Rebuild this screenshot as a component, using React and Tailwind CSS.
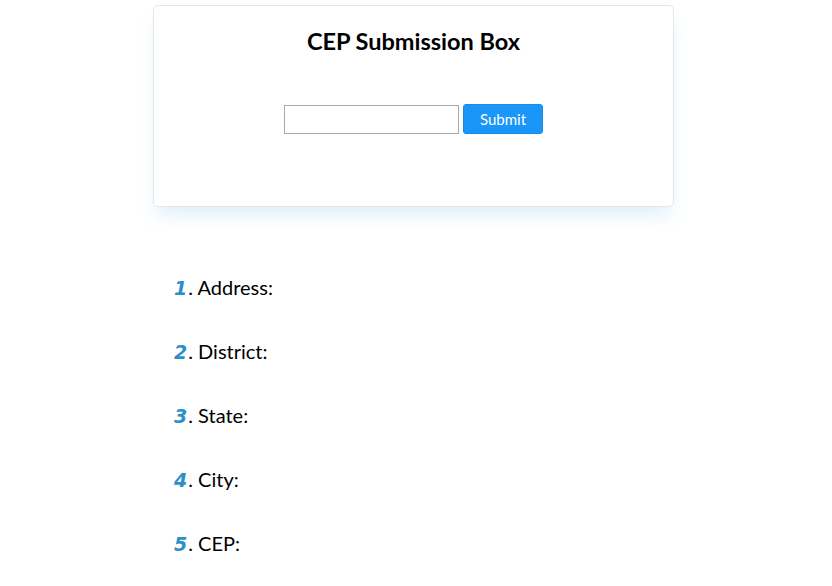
export default function App() {
  const fields = ['Address', 'District', 'State', 'City', 'CEP']

  return (
    <div className="min-h-[586px] bg-white font-['Lato','Liberation_Sans',sans-serif] text-black">
      <div className="ml-[153px] mt-[5px] w-[521px] h-[202px] rounded-[5px] border border-[#e4e6e8] bg-white shadow-[0_12px_18px_-4px_rgba(80,170,230,0.18)] flex flex-col items-center">
        <h1 className="mt-[23px] text-[23.5px] leading-[24px] font-bold">CEP Submission Box</h1>
        <div className="mt-[51px] flex items-center gap-[4px]">
          <input
            type="text"
            className="w-[175px] h-[29px] border border-[#a9a9a9] bg-white outline-none px-1"
          />
          <button className="w-[80px] h-[30px] rounded-[3px] bg-[#1996f7] border border-[#1a8ae8] text-white text-[15px] leading-none">
            Submit
          </button>
        </div>
      </div>

      <ul className="ml-[174px] mt-[68px] flex flex-col gap-[40px]">
        {fields.map((f, i) => (
          <li key={f} className="flex items-baseline h-[24px] text-[20px] leading-[24px]">
            <span className="font-bold italic text-[#2b90c8] font-['DejaVu_Sans',sans-serif] text-[19px] mr-[1px]">{i + 1}</span>
            <span>. {f}:</span>
          </li>
        ))}
      </ul>
    </div>
  )
}
